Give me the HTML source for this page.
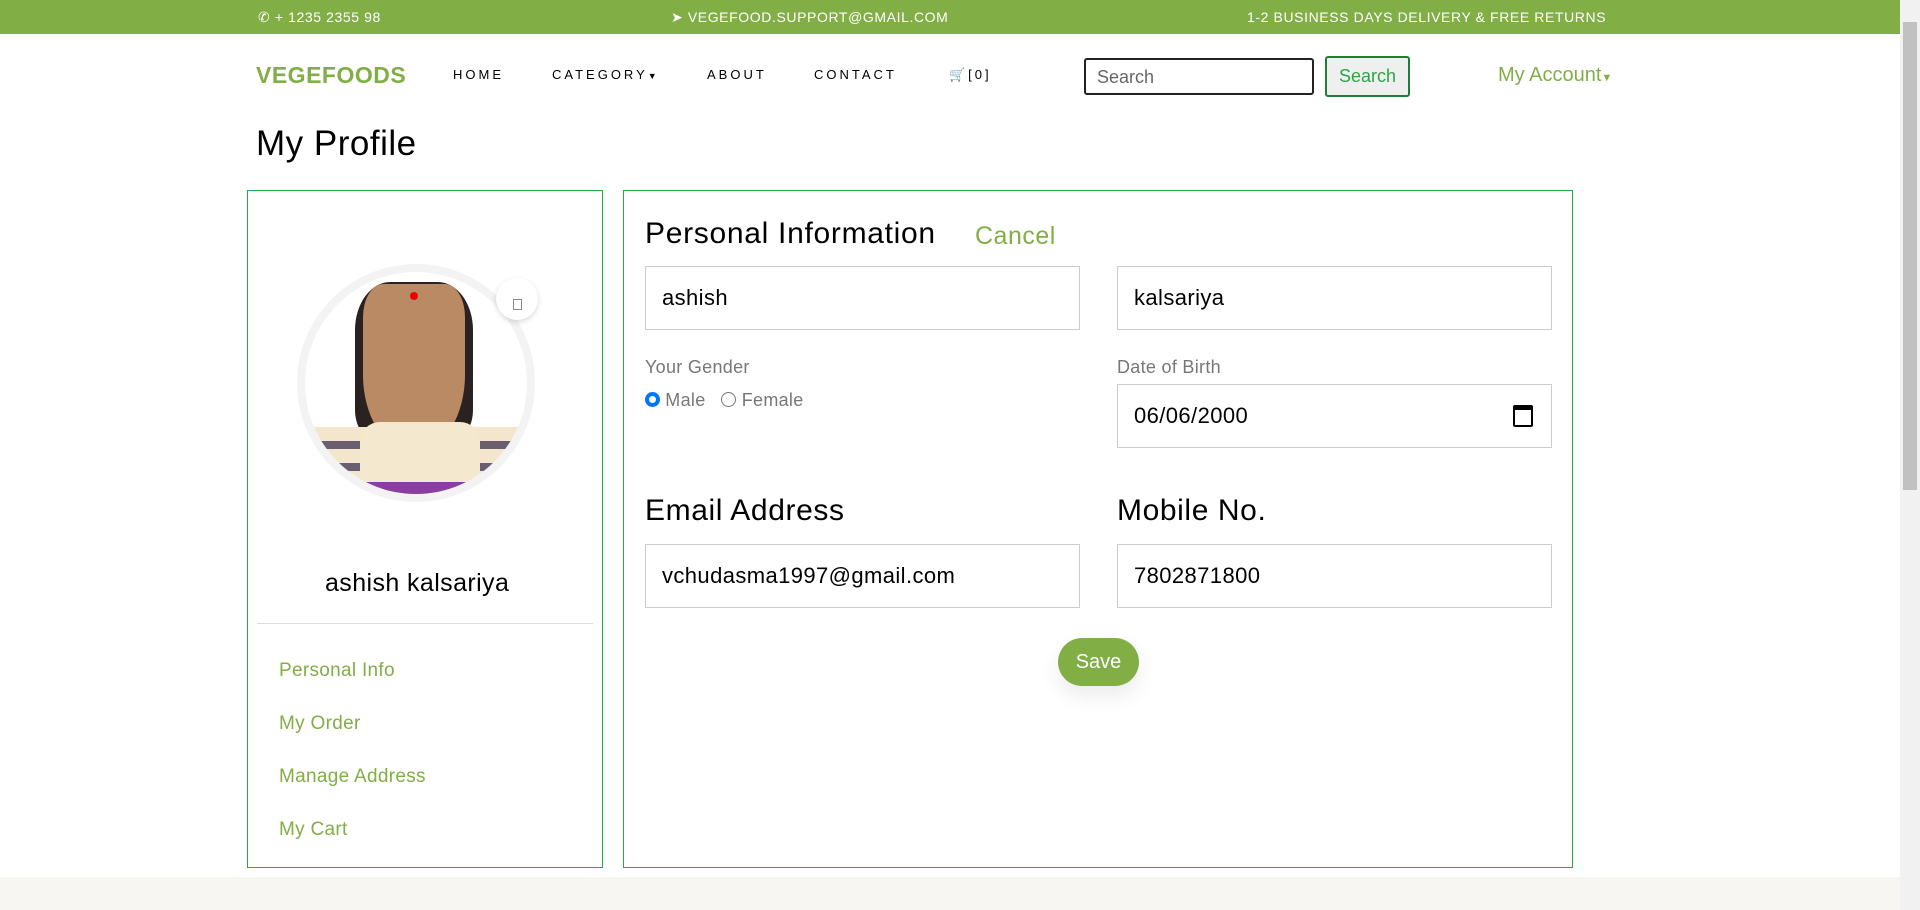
<!DOCTYPE html>
<html><head><meta charset="utf-8"><style>
*{box-sizing:border-box;margin:0;padding:0}
body{width:1920px;height:910px;position:relative;overflow:hidden;background:#fff;font-family:"Liberation Sans",sans-serif;color:#000}
.a{position:absolute;white-space:nowrap}
.top{position:absolute;left:0;top:0;width:1900px;height:34px;background:#82ae46;color:#fff;font-size:14px;letter-spacing:0.6px}
.nav{font-size:13px;letter-spacing:3px;color:#000;top:67px}
.box{position:absolute;border:1px solid #28a745}
.inp{position:absolute;border:1px solid #ccc;height:64px;font-size:22px;padding-left:16px;line-height:62px;letter-spacing:0.4px}
.lnk{color:#82ae46;font-size:19px;left:279px;letter-spacing:0.3px}
.lbl{color:#777;font-size:18px;letter-spacing:0.3px}
</style></head><body>
<div class="top">
<div class="a" style="left:258px;top:9px">&#9990; + 1235 2355 98</div>
<div class="a" style="left:671px;top:9px">&#10148; VEGEFOOD.SUPPORT@GMAIL.COM</div>
<div class="a" style="left:1247px;top:9px">1-2 BUSINESS DAYS DELIVERY &amp; FREE RETURNS</div>
</div>
<div class="a" style="left:256px;top:62px;font-size:23px;font-weight:bold;color:#82ae46;letter-spacing:0.5px">VEGEFOODS</div>
<div class="a nav" style="left:453px">HOME</div>
<div class="a nav" style="left:552px">CATEGORY<span style="font-size:9px;letter-spacing:0">&#9660;</span></div>
<div class="a nav" style="left:707px">ABOUT</div>
<div class="a nav" style="left:814px">CONTACT</div>
<div class="a nav" style="left:949px">&#128722;[0]</div>
<div class="a" style="left:1084px;top:58px;width:230px;height:37px;border:2px solid #222;border-radius:3px;font-size:18px;color:#666;padding:7px 11px">Search</div>
<div class="a" style="left:1325px;top:56px;width:85px;height:41px;border:2px solid #1e7e34;border-radius:3px;background:#efefef;font-size:18px;color:#28a745;text-align:center;line-height:37px">Search</div>
<div class="a" style="left:1498px;top:64px;font-size:20px;color:#82ae46">My Account<span style="font-size:11px">&#9660;</span></div>
<div class="a" style="left:256px;top:124px;font-size:35px;letter-spacing:0.5px">My Profile</div>

<div class="box" style="left:247px;top:190px;width:356px;height:678px"></div>
<div class="a" style="left:297px;top:264px;width:238px;height:238px;border-radius:50%;border:8px solid #f3f3f3;background:#fff;overflow:hidden">
<div style="position:absolute;left:50px;top:10px;width:118px;height:160px;background:#2a2220;border-radius:30% 30% 20% 20%"></div>
<div style="position:absolute;left:58px;top:12px;width:102px;height:165px;background:#b98a64;border-radius:20% 20% 45% 45%"></div>
<div style="position:absolute;left:105px;top:20px;width:8px;height:8px;background:#e00;border-radius:50%"></div>
<div style="position:absolute;left:0;top:155px;width:230px;height:90px;background:repeating-linear-gradient(#f3e6cc 0 14px,#6a5f70 14px 22px)"></div>
<div style="position:absolute;left:55px;top:150px;width:120px;height:90px;background:#f4e8cf;border-radius:20px 20px 0 0"></div>
<div style="position:absolute;left:0;top:210px;width:230px;height:20px;background:#8a3fa0"></div>
</div>
<div class="a" style="left:496px;top:278px;width:42px;height:42px;border-radius:50%;background:#fff;box-shadow:0 2px 6px rgba(0,0,0,.15)"><span style="position:absolute;left:17px;top:21px;width:9px;height:11px;border:1px solid #888"></span></div>
<div class="a" style="left:325px;top:569px;font-size:25px;letter-spacing:0.4px">ashish kalsariya</div>
<div class="a" style="left:257px;top:623px;width:336px;height:1px;background:#ddd"></div>
<div class="a lnk" style="top:660px">Personal Info</div>
<div class="a lnk" style="top:713px">My Order</div>
<div class="a lnk" style="top:766px">Manage Address</div>
<div class="a lnk" style="top:819px">My Cart</div>

<div class="box" style="left:623px;top:190px;width:950px;height:678px"></div>
<div class="a" style="left:645px;top:217px;font-size:30px;letter-spacing:0.7px">Personal Information</div>
<div class="a" style="left:975px;top:222px;font-size:25px;color:#82ae46;letter-spacing:0.5px">Cancel</div>
<div class="inp" style="left:645px;top:266px;width:435px">ashish</div>
<div class="inp" style="left:1117px;top:266px;width:435px">kalsariya</div>
<div class="a lbl" style="left:645px;top:357px">Your Gender</div>
<div class="a lbl" style="left:645px;top:390px"><span style="display:inline-block;width:15px;height:15px;border-radius:50%;border:4px solid #0075ff;vertical-align:-1px"></span> Male &nbsp;&nbsp;<span style="display:inline-block;width:15px;height:15px;border-radius:50%;border:1.5px solid #777;vertical-align:-1px"></span> Female</div>
<div class="a lbl" style="left:1117px;top:357px">Date of Birth</div>
<div class="inp" style="left:1117px;top:384px;width:435px">06/06/2000<span style="position:absolute;right:18px;top:20px;width:20px;height:22px;border:2.5px solid #000;border-top-width:5px;border-radius:2px"></span></div>
<div class="a" style="left:645px;top:494px;font-size:30px;letter-spacing:0.6px">Email Address</div>
<div class="a" style="left:1117px;top:494px;font-size:30px;letter-spacing:0.6px">Mobile No.</div>
<div class="inp" style="left:645px;top:544px;width:435px">vchudasma1997@gmail.com</div>
<div class="inp" style="left:1117px;top:544px;width:435px">7802871800</div>
<div class="a" style="left:1058px;top:638px;width:81px;height:48px;border-radius:24px;background:#82ae46;color:#fff;font-size:20px;text-align:center;line-height:48px;box-shadow:0 10px 20px rgba(0,0,0,.08)">Save</div>

<div class="a" style="left:0;top:877px;width:1900px;height:33px;background:#f7f6f2"></div>
<div class="a" style="left:1900px;top:0;width:20px;height:910px;background:#f1f1f1"></div>
<div class="a" style="left:1903px;top:22px;width:14px;height:468px;background:#c1c1c1"></div>
</body></html>
